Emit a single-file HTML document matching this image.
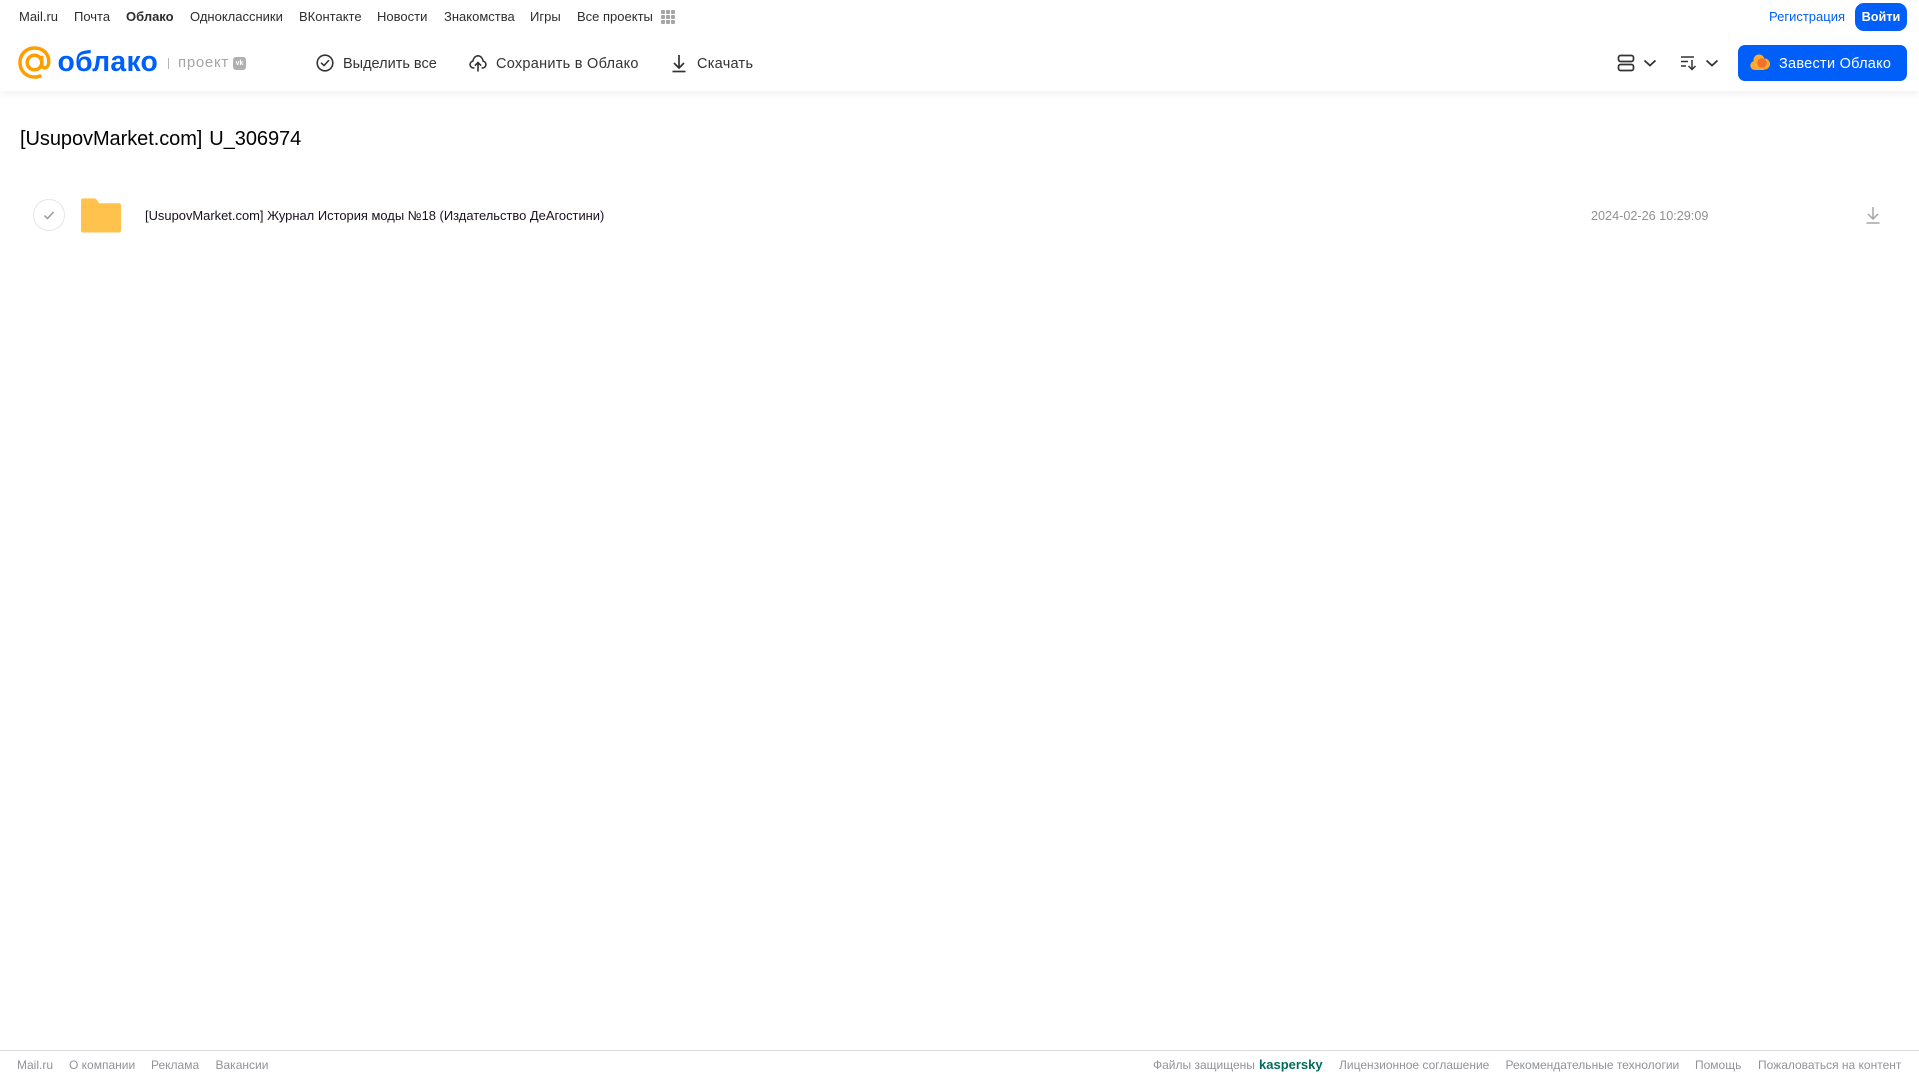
<!DOCTYPE html>
<html lang="ru"><head><meta charset="utf-8"><title>Облако</title>
<style>
html,body{margin:0;padding:0;background:#fff;width:1919px;height:1079px;overflow:hidden}
body{position:relative;font-family:"Liberation Sans",Arial,sans-serif}
.t{position:absolute;white-space:nowrap;line-height:16px}
.n{top:9px;font-size:13px;color:#2c2d2e}
.a{top:55.500px;font-size:14.500px;color:#333;letter-spacing:.27px}
.f{top:1057px;font-size:12px;color:#919399}
svg{position:absolute;display:block}
</style></head><body>
<div style="position:absolute;left:0;top:0;width:1919px;height:91px;background:#fff;box-shadow:0 2px 8px rgba(0,0,0,.07)"></div>

<span class="t n" style="left:19px">Mail.ru</span>
<span class="t n" style="left:74px">Почта</span>
<span class="t n" style="left:126px;font-weight:700">Облако</span>
<span class="t n" style="left:190px">Одноклассники</span>
<span class="t n" style="left:299px">ВКонтакте</span>
<span class="t n" style="left:377px">Новости</span>
<span class="t n" style="left:444px">Знакомства</span>
<span class="t n" style="left:530px">Игры</span>
<span class="t n" style="left:577px">Все проекты</span>
<svg style="left:660px;top:9px" width="16" height="16" fill="#a5a5a5"><rect x="1" y="1" width="4" height="4" rx="1"/><rect x="6" y="1" width="4" height="4" rx="1"/><rect x="11" y="1" width="4" height="4" rx="1"/><rect x="1" y="6" width="4" height="4" rx="1"/><rect x="6" y="6" width="4" height="4" rx="1"/><rect x="11" y="6" width="4" height="4" rx="1"/><rect x="1" y="11" width="4" height="4" rx="1"/><rect x="6" y="11" width="4" height="4" rx="1"/><rect x="11" y="11" width="4" height="4" rx="1"/></svg>

<span class="t n" style="left:1769px;color:#005ff9">Регистрация</span>
<div style="position:absolute;left:1855px;top:3px;width:52px;height:28px;background:#005ff9;border-radius:9px"></div>
<span class="t n" style="left:1855px;width:52px;text-align:center;color:#fff;font-weight:700;font-size:12.700px">Войти</span>

<svg style="left:18px;top:46px" width="33" height="33" viewBox="0 0 34 34" fill="none" stroke="#ff9e00" stroke-width="3.600"><circle cx="17" cy="17" r="7.500"/><path d="M24.500 10v9c0 5 6.500 5 7.100-1.500C32.500 8 25.500 2 17 2 8.500 2 2 8.500 2 17s6.500 15 15 15c2.800 0 5-.6 7-1.700"/></svg>
<span class="t" style="left:57.500px;top:43px;line-height:36px;font-size:28.300px;font-weight:700;color:#005ff9;letter-spacing:.3px">облако</span>
<div style="position:absolute;left:168px;top:58px;width:1px;height:11px;background:#b5b5b5"></div>
<span class="t" style="left:178px;top:55px;font-size:15px;color:#a6a6a6;letter-spacing:.7px">проект</span>
<div style="position:absolute;left:233px;top:57px;width:13px;height:13px;background:#b0b0b0;border-radius:3px"></div>
<span class="t" style="left:233px;top:57px;width:13px;height:13px;line-height:13px;font-size:7px;font-weight:700;color:#fff;text-align:center">vk</span>

<svg style="left:315px;top:54px" width="20" height="18" viewBox="0 0 20 18" fill="none" stroke="#333" stroke-width="1.600"><circle cx="10" cy="9" r="7.800"/><path d="M6.500 9.200l2.500 2.400 4.500-5" stroke-linecap="round" stroke-linejoin="round"/></svg>
<span class="t a" style="left:343px;letter-spacing:0">Выделить все</span>

<svg style="left:469px;top:54px" width="18" height="18" viewBox="0 0 20 20" fill="none" stroke="#333" stroke-width="1.800"><path d="M6 15.500H5C2.800 15.500 1.200 13.800 1.200 11.700c0-1.800 1.300-3.400 3-3.700C5 4.500 7.200 2 10 2s5 2.500 5.800 6c1.700.3 3 1.900 3 3.700 0 2.100-1.600 3.800-3.800 3.800h-1"/><path d="M10 19.500V9.500M6.500 13L10 9.500 13.500 13"/></svg>
<span class="t a" style="left:496px">Сохранить в Облако</span>

<svg style="left:671px;top:54px" width="16" height="19" viewBox="0 0 16 19" fill="none" stroke="#333" stroke-width="1.700"><path d="M8 1v12.500M3 9l5 5 5-5"/><path d="M1.500 17.500h13"/></svg>
<span class="t a" style="left:697px">Скачать</span>

<svg style="left:1617px;top:54px" width="18" height="18" viewBox="0 0 18 18" fill="none" stroke="#333" stroke-width="1.700"><rect x="1.500" y="1.500" width="15" height="6" rx="2"/><rect x="1.500" y="10.500" width="15" height="6" rx="2"/></svg>
<svg style="left:1643px;top:59px" width="14" height="9" viewBox="0 0 14 9" fill="none" stroke="#333" stroke-width="1.800"><path d="M1.500 1.500L7 6.500l5.500-5"/></svg>
<svg style="left:1680px;top:55px" width="18" height="16" viewBox="0 0 18 16" fill="none" stroke="#333" stroke-width="1.500"><path d="M1 2h13M1 6.500h7M1 11h5"/><path d="M12 5v9.500M8.500 11l3.500 3.500 3.500-3.500"/></svg>
<svg style="left:1705px;top:59px" width="14" height="9" viewBox="0 0 14 9" fill="none" stroke="#333" stroke-width="1.800"><path d="M1.500 1.500L7 6.500l5.500-5"/></svg>

<div style="position:absolute;left:1738px;top:45px;width:169px;height:36px;background:#005ff9;border-radius:7px"></div>
<svg style="left:1750px;top:54px" width="20" height="17" viewBox="0 0 20 17"><g fill="#ffa930"><circle cx="4.800" cy="11.500" r="4.500"/><circle cx="9" cy="6" r="5.500"/><circle cx="14.500" cy="10" r="5.500"/><rect x="5" y="9" width="9" height="7"/></g><circle cx="12" cy="9" r="4.800" fill="#f4702a"/></svg>
<span class="t a" style="left:1779px;color:#fff">Завести Облако</span>

<span class="t" style="left:20px;top:126.500px;line-height:24px;font-size:20px;color:#000;word-spacing:1.500px;letter-spacing:-.06px">[UsupovMarket.com] U_306974</span>

<svg style="left:32px;top:198px" width="34" height="34" viewBox="0 0 34 34" fill="none"><circle cx="17" cy="17" r="15.500" stroke="#e6e6e6"/><path d="M12.500 17.500l3 3 6-6.500" stroke="#999" stroke-width="1.500"/></svg>
<svg style="left:81px;top:197px" width="40" height="36" viewBox="0 0 41 36"><path d="M2 1h11c2 0 3 .8 4 2.500L18.500 6H39c1.100 0 2 .9 2 2v26c0 1.100-.9 2-2 2H2c-1.100 0-2-.9-2-2V3c0-1.100.9-2 2-2z" fill="#ffc24d"/><path d="M0 9.500h41V10H0z" fill="#ffb63a"/></svg>
<span class="t" style="left:145px;top:208px;font-size:12.930px;color:#1a1020">[UsupovMarket.com] Журнал История моды №18 (Издательство ДеАгостини)</span>
<span class="t" style="left:1591px;top:208px;font-size:12.650px;color:#909090">2024-02-26 10:29:09</span>
<svg style="left:1865px;top:206px" width="16" height="19" viewBox="0 0 16 19" fill="none" stroke="#a5a5a5" stroke-width="1.500"><path d="M8 1v11.500M3 8l5 5 5-5"/><path d="M1.500 17h13"/></svg>

<div style="position:absolute;left:0;top:1050px;width:1919px;height:1px;background:#d9d9d9"></div>
<span class="t f" style="left:17px">Mail.ru</span>
<span class="t f" style="left:69px">О компании</span>
<span class="t f" style="left:151px">Реклама</span>
<span class="t f" style="left:215.500px">Вакансии</span>
<span class="t f" style="left:1153px">Файлы защищены</span>
<span class="t f" style="left:1259px;color:#006d5c;font-weight:700;font-size:13px">kaspersky</span>
<span class="t f" style="left:1339px">Лицензионное соглашение</span>
<span class="t f" style="left:1505.500px">Рекомендательные технологии</span>
<span class="t f" style="left:1695px">Помощь</span>
<span class="t f" style="left:1758px">Пожаловаться на контент</span>
</body></html>
